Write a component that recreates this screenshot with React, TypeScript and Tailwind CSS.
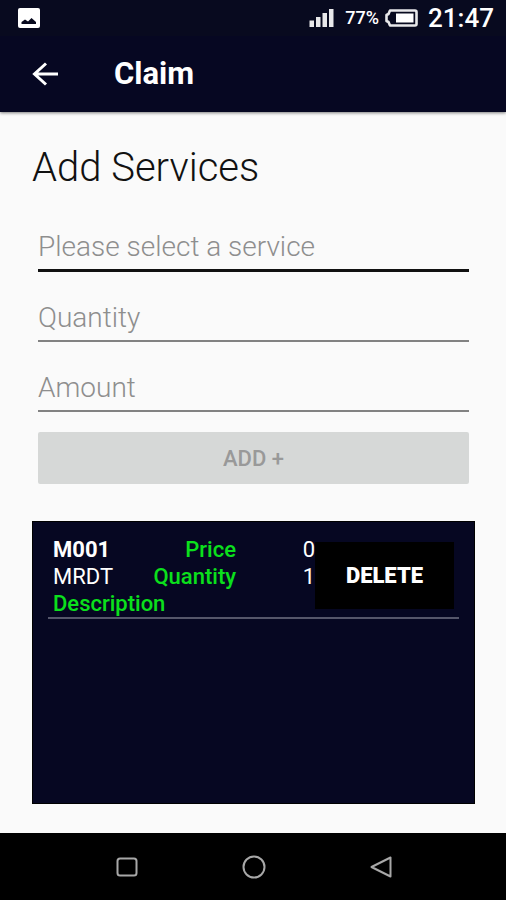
import React, { useState } from 'react';

interface Service {
  code: string;
  name: string;
  price: number;
  quantity: number;
}

interface FieldProps {
  label: string;
  value: string;
  active?: boolean;
  onChange: (value: string) => void;
}

const INITIAL_SERVICES: Service[] = [{ code: 'M001', name: 'MRDT', price: 0, quantity: 1 }];

const StatusBar: React.FC = () => (
  <div className="flex h-9 items-center bg-[#080a1f] pl-[18px] pr-3 text-white">
    <svg viewBox="0 0 22 20" className="h-5 w-[22px]" aria-hidden="true">
      <rect width="22" height="20" rx="2" fill="#fff" />
      <path d="M3.500 16v-2l3.500-2.500 3 2 3.500-3.500 4.500 4v2z" fill="#080a1f" />
    </svg>
    <div className="ml-auto flex items-center">
      <svg viewBox="0 0 26 18" className="h-[18px] w-[26px]" fill="#e8e8ea" aria-hidden="true">
        <rect x="0.500" y="11.500" width="4.500" height="6.500" />
        <rect x="7" y="8" width="4.500" height="10" />
        <rect x="13.500" y="4" width="4.500" height="14" />
        <rect x="20" y="0" width="4.500" height="18" />
      </svg>
      <span className="ml-2.5 text-lg font-medium">77%</span>
      <svg viewBox="0 0 33 18" className="ml-1.5 h-[18px] w-[33px]" aria-hidden="true">
        <path
          d="M5 1.500h25a1.500 1.500 0 0 1 1.500 1.500v12a1.500 1.500 0 0 1-1.500 1.500H5L3.500 13 1.500 12V6l2-1z"
          fill="none"
          stroke="#e8e8ea"
          strokeWidth="2.600"
          strokeLinejoin="round"
        />
        <rect x="11" y="4.500" width="17.500" height="9" fill="#fff" />
      </svg>
      <span className="ml-2.5 text-[26px] font-medium">21:47</span>
    </div>
  </div>
);

const AppBar: React.FC = () => (
  <header className="z-10 bg-[#060722] text-white shadow-[0_1px_3px_rgba(0,0,0,0.5)]">
    <StatusBar />
    <div className="flex h-[76px] items-center pl-8">
      <button type="button" aria-label="Back">
        <svg viewBox="0 0 28 24" className="h-6 w-7" fill="none" stroke="#fff" strokeWidth="3" aria-hidden="true">
          <path d="M26 12H2.500M14 1.500 2.500 12 14 22.500" />
        </svg>
      </button>
      <h1 className="ml-[54px] text-[31px] font-bold">Claim</h1>
    </div>
  </header>
);

const Field: React.FC<FieldProps> = ({ label, value, active, onChange }) => (
  <div className="flex h-[70px] flex-col justify-end">
    <input
      aria-label={label}
      value={value}
      placeholder={label}
      onChange={(e) => onChange(e.target.value)}
      className={
        active
          ? 'h-12 w-full border-b-3 border-[#111] text-[28px] font-light text-[#222] outline-none placeholder:text-[#8e8e8e]'
          : 'h-12 w-full border-b-2 border-[#828282] text-[28px] font-light text-[#222] outline-none placeholder:text-[#8e8e8e]'
      }
    />
  </div>
);

const ServiceRow: React.FC<{ service: Service; onDelete: () => void }> = ({ service, onDelete }) => (
  <li className="flex justify-between border-b-2 border-[#55566a] px-[5px]">
    <div className="grid flex-1 grid-cols-[70px_113px_1fr] text-[22px]/[27px] font-medium">
      <span className="font-bold">{service.code}</span>
      <span className="text-right text-[#0be01c]">Price</span>
      <span className="text-right font-normal">{service.price}</span>
      <span className="font-normal">{service.name}</span>
      <span className="text-right text-[#0be01c]">Quantity</span>
      <span className="text-right font-normal">{service.quantity}</span>
      <span className="col-span-3 text-[#0be01c]">Description</span>
    </div>
    <button type="button" onClick={onDelete} className="mt-1.5 mb-2 w-[139px] bg-black text-[22px] font-black">
      DELETE
    </button>
  </li>
);

const NavBar: React.FC = () => (
  <nav className="grid h-[67px] grid-cols-3 place-items-center bg-black pr-[62px] pl-16">
    <button type="button" aria-label="Recent apps">
      <svg viewBox="0 0 24 24" className="size-6" fill="none" stroke="#a8a8a8" strokeWidth="2" aria-hidden="true">
        <rect x="2.500" y="3.500" width="19" height="17" rx="2.500" />
      </svg>
    </button>
    <button type="button" aria-label="Home">
      <svg viewBox="0 0 24 24" className="size-6" fill="none" stroke="#a8a8a8" strokeWidth="2" aria-hidden="true">
        <circle cx="12" cy="12" r="10.500" />
      </svg>
    </button>
    <button type="button" aria-label="Back">
      <svg viewBox="0 0 24 24" className="size-6" fill="none" stroke="#a8a8a8" strokeWidth="2" strokeLinejoin="round" aria-hidden="true">
        <path d="M21.500 2.500v19L2.500 12z" />
      </svg>
    </button>
  </nav>
);

export default function App() {
  const [service, setService] = useState('');
  const [quantity, setQuantity] = useState('');
  const [amount, setAmount] = useState('');
  const [services, setServices] = useState(INITIAL_SERVICES);

  const canAdd = service !== '' && quantity !== '' && amount !== '';

  const handleSubmit = (e: React.FormEvent) => {
    e.preventDefault();
    if (!canAdd) return;
    setServices([...services, { code: service, name: service, price: Number(amount), quantity: Number(quantity) }]);
    setService('');
    setQuantity('');
    setAmount('');
  };

  return (
    <div className="flex min-h-screen flex-col bg-[#fafafa] font-[Roboto,sans-serif]">
      <AppBar />
      <main className="flex flex-1 flex-col pt-8 pr-[31px] pb-[29px] pl-8">
        <h2 className="text-[40px]/[48px] font-light text-[#111]">Add Services</h2>
        <form onSubmit={handleSubmit} className="mt-2.5 px-1.5">
          <Field label="Please select a service" value={service} onChange={setService} active />
          <Field label="Quantity" value={quantity} onChange={setQuantity} />
          <Field label="Amount" value={amount} onChange={setAmount} />
          <button
            type="submit"
            disabled={!canAdd}
            className="mt-5 h-[52px] w-full rounded-xs bg-[#d6d8d7] text-[22px] font-medium text-[#999]"
          >
            ADD +
          </button>
        </form>
        <ul className="mt-[37px] flex-1 border border-black bg-[#060722] px-[15px] pt-3.5 text-white">
          {services.map((item, index) => (
            <ServiceRow
              key={index}
              service={item}
              onDelete={() => setServices(services.filter((_, i) => i !== index))}
            />
          ))}
        </ul>
      </main>
      <NavBar />
    </div>
  );
}
